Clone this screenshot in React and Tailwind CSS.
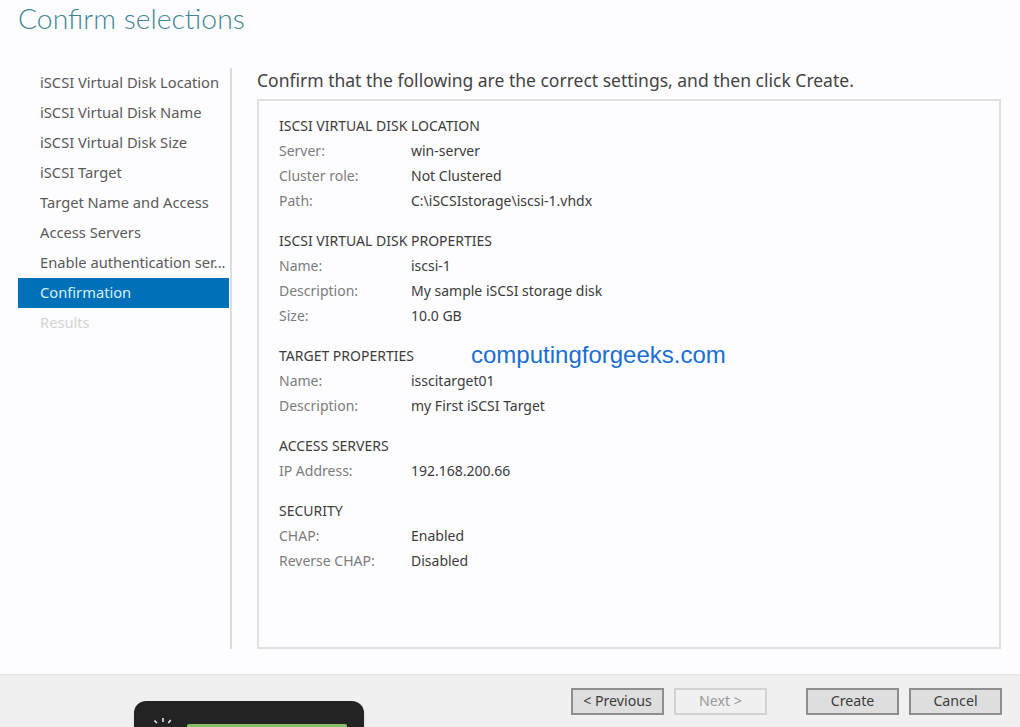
import React from 'react';

const steps = [
  'iSCSI Virtual Disk Location',
  'iSCSI Virtual Disk Name',
  'iSCSI Virtual Disk Size',
  'iSCSI Target',
  'Target Name and Access',
  'Access Servers',
  'Enable authentication ser...',
];

const sections = [
  {
    title: 'ISCSI VIRTUAL DISK LOCATION',
    rows: [
      ['Server:', 'win-server'],
      ['Cluster role:', 'Not Clustered'],
      ['Path:', 'C:\\iSCSIstorage\\iscsi-1.vhdx'],
    ],
  },
  {
    title: 'ISCSI VIRTUAL DISK PROPERTIES',
    rows: [
      ['Name:', 'iscsi-1'],
      ['Description:', 'My sample iSCSI storage disk'],
      ['Size:', '10.0 GB'],
    ],
  },
  {
    title: 'TARGET PROPERTIES',
    rows: [
      ['Name:', 'isscitarget01'],
      ['Description:', 'my First iSCSI Target'],
    ],
  },
  {
    title: 'ACCESS SERVERS',
    rows: [['IP Address:', '192.168.200.66']],
  },
  {
    title: 'SECURITY',
    rows: [
      ['CHAP:', 'Enabled'],
      ['Reverse CHAP:', 'Disabled'],
    ],
  },
];

const WizardButton = ({ text, disabled }) => (
  <button
    className={`w-[93px] h-[27px] border-2 text-[14.2px] leading-none ${
      disabled
        ? 'border-[#d2d2d2] bg-[#f0f0f0] text-[#9a9a9a]'
        : 'border-[#8e8e8e] bg-[#dedede] text-[#3c3c3c]'
    }`}
  >
    {text}
  </button>
);

const App = () => {
  return (
    <div className="relative w-[1020px] h-[727px] overflow-hidden flex flex-col bg-[#fdfcfe] font-['Noto_Sans',sans-serif]">
      <h1 className="h-[68px] pl-[18px] font-['Lato',sans-serif] font-light text-[28.3px] leading-[36px] text-[#3f8796]">Confirm selections</h1>

      <div className="h-[581px] flex items-stretch">
        {/* wizard steps */}
        <div className="w-[214px] ml-[18px] border-r-2 border-[#dcdcdc]">
          <ul className="w-[211px] text-[14.7px] leading-[29px] text-[#5a5a5a]">
            {steps.map((step) => (
              <li key={step} className="h-[30px] pl-[22px] whitespace-nowrap">{step}</li>
            ))}
            <li className="h-[30px] pl-[22px] bg-[#0070b8] text-[#d8f0fa]">Confirmation</li>
            <li className="h-[30px] pl-[22px] text-[#d4d4d4]">Results</li>
          </ul>
        </div>

        {/* summary */}
        <div className="w-[744px] ml-[25px] flex flex-col">
          <p className="h-[31px] text-[17.5px] leading-[25px] text-[#444444] whitespace-nowrap">
            Confirm that the following are the correct settings, and then click Create.
          </p>
          <div className="flex-1 border-2 border-[#e0e0e0] pl-[20px] pt-[12px] flex flex-col gap-[15px]">
            {sections.map((section) => (
              <div key={section.title}>
                <h2 className="h-[25px] text-[14px] leading-[25px] text-[#3c3c3c]">{section.title}</h2>
                {section.rows.map(([label, value]) => (
                  <div key={label} className="h-[25px] flex text-[14px] leading-[25px]">
                    <span className="w-[132px] text-[#7c7c7c]">{label}</span>
                    <span className="text-[#3c3c3c]">{value}</span>
                  </div>
                ))}
              </div>
            ))}
          </div>
        </div>
      </div>

      {/* footer */}
      <div className="mt-[25px] flex-1 border-t border-[#e2e2e2] bg-[#f0f0f0] flex justify-end pt-[13px] pr-[18px]">
        <div className="flex gap-[10px] items-start">
          <WizardButton text="< Previous" />
          <WizardButton text="Next >" disabled />
        </div>
        <div className="flex gap-[10px] ml-[39px] items-start">
          <WizardButton text="Create" />
          <WizardButton text="Cancel" />
        </div>
      </div>

      {/* watermark */}
      <span className="absolute left-[471px] top-[340px] text-[24px] leading-[30px] text-[#1a6fd4] font-['Liberation_Sans',sans-serif]">
        computingforgeeks.com
      </span>

      {/* recording widget */}
      <div className="absolute left-[134px] top-[701px] w-[230px] h-[60px] rounded-t-[12px] bg-[#232323] shadow-md">
        <svg className="absolute left-[18px] top-[17px]" width="24" height="12" viewBox="0 0 24 12" stroke="#f0f0f0" strokeWidth="1.5">
          <path d="M11 0v4M2.5 2.5L5 5M18.7 2l-2.4 3" />
        </svg>
        <div className="absolute left-[53px] top-[23px] w-[160px] h-[20px] rounded-[2px] bg-[#84bd6a]" />
      </div>
    </div>
  );
};

export default App;
